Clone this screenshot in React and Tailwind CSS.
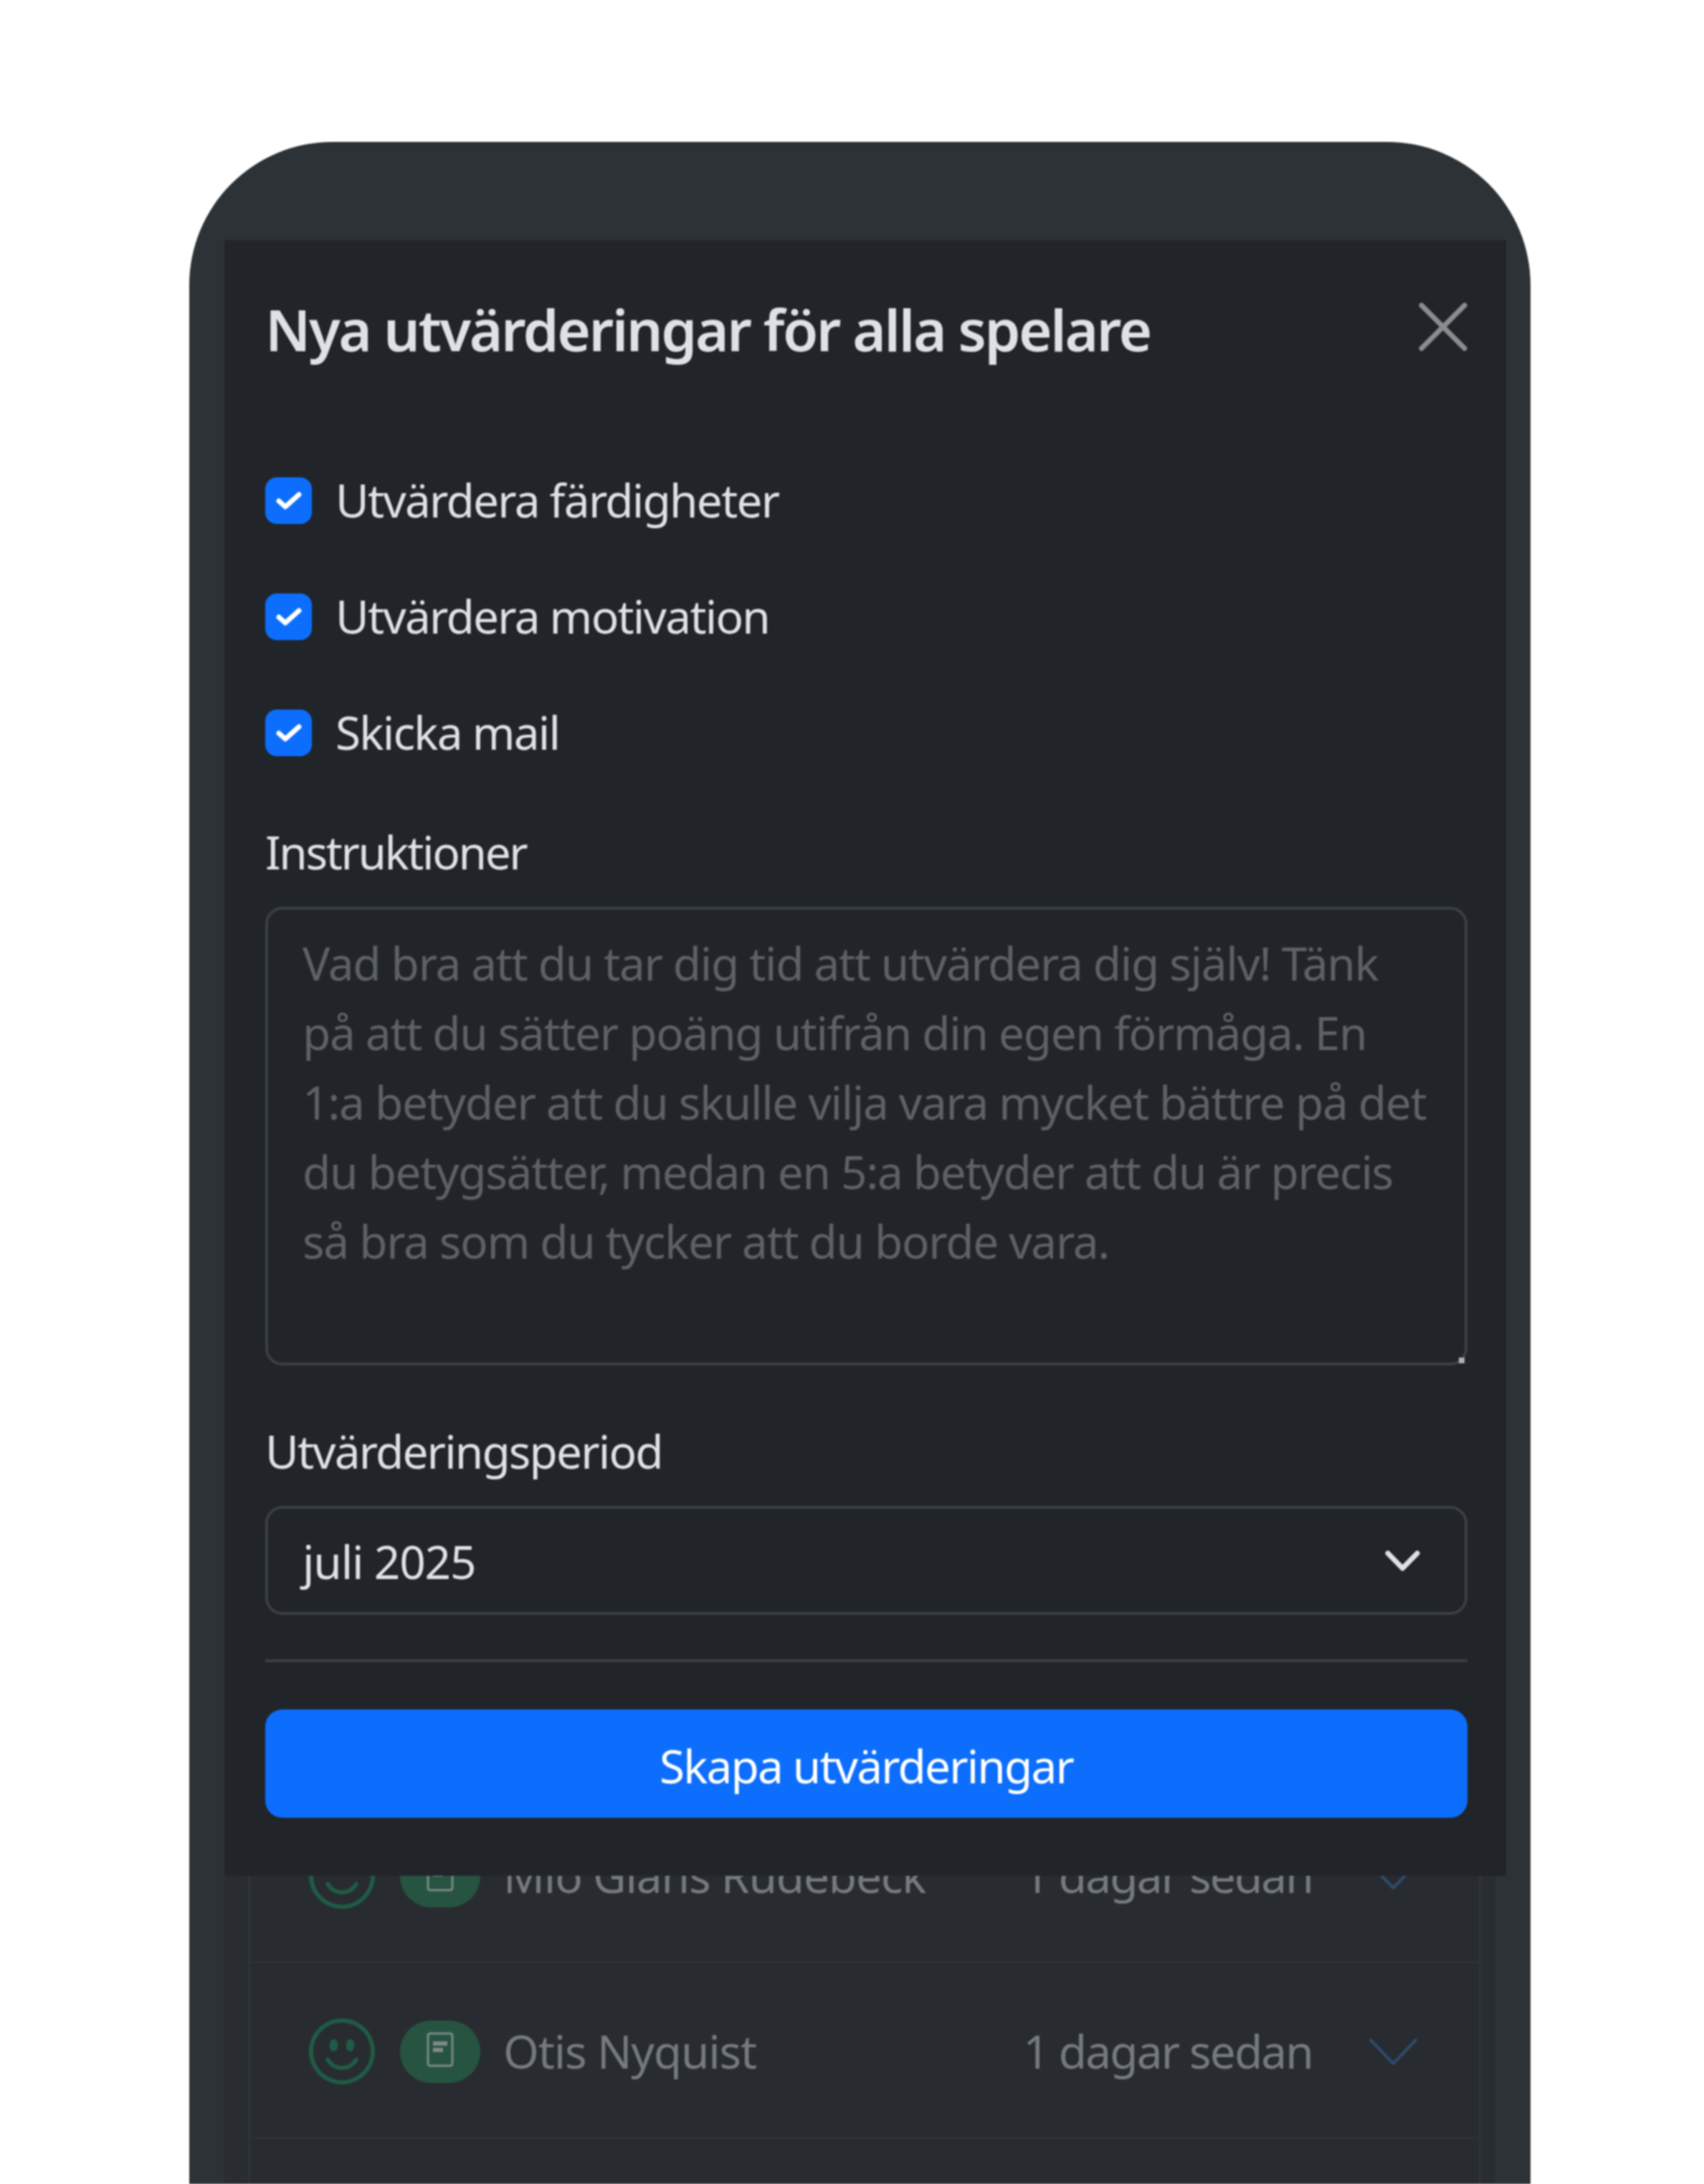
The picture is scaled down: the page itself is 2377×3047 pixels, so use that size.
import { X } from "lucide-react";

const font = "font-['Noto_Sans','Open_Sans',sans-serif]";

function CheckRow({ label }) {
  return (
    <label className="flex h-[162px] items-center gap-[33px]">
      <span className="flex h-[65px] w-[65px] items-center justify-center rounded-[16px] bg-[#0d6efd]">
        <svg viewBox="0 0 36 25" className="h-[25px] w-[36px]" fill="none" stroke="#fff" strokeWidth="7" strokeLinecap="round" strokeLinejoin="round">
          <path d="M4 13l9 8L32 4" />
        </svg>
      </span>
      <span className="text-[64px] leading-[96px] tracking-[-1.8px] text-[#dee2e6]">{label}</span>
    </label>
  );
}

function PlayerRow({ name }) {
  return (
    <div className="flex h-[245px] items-center border-b-[3px] border-[#2d3236] pl-[82px] pr-[86px] pt-[4px]">
      <svg viewBox="0 0 16 16" className="h-[92px] w-[92px] shrink-0" fill="#1f5c45">
        <path d="M8 15A7 7 0 1 1 8 1a7 7 0 0 1 0 14m0 1A8 8 0 1 0 8 0a8 8 0 0 0 0 16" />
        <path d="M4.285 9.567a.5.5 0 0 1 .683.183A3.5 3.5 0 0 0 8 11.5a3.5 3.5 0 0 0 3.032-1.75.5.5 0 1 1 .866.5A4.5 4.5 0 0 1 8 12.5a4.5 4.5 0 0 1-3.898-2.25.5.5 0 0 1 .183-.683M7 6.5C7 7.328 6.552 8 6 8s-1-.672-1-1.5S5.448 5 6 5s1 .672 1 1.5m4 0c0 .828-.448 1.5-1 1.5s-1-.672-1-1.5S9.448 5 10 5s1 .672 1 1.5" />
      </svg>
      <span className="ml-[35px] flex h-[87px] w-[112px] shrink-0 items-center justify-center rounded-full bg-[#265441]">
        <svg viewBox="0 0 38 49" className="mb-[6px] h-[49px] w-[38px]" fill="none">
          <rect x="2" y="2" width="34" height="45" rx="3" stroke="#7d8a88" strokeWidth="3" />
          <rect x="9" y="13" width="20" height="6" fill="#7d8a88" />
          <rect x="9" y="22" width="14" height="6" fill="#7d8a88" />
        </svg>
      </span>
      <span className="ml-[32px] flex-1 text-[64px] leading-[96px] tracking-[-1.2px] text-[#757a7f]">{name}</span>
      <span className="text-[64px] leading-[96px] text-[#757a7f]">1 dagar sedan</span>
      <svg viewBox="0 0 67 37" className="ml-[79px] h-[37px] w-[67px]" fill="none" stroke="#2f4a6d" strokeWidth="4" strokeLinecap="round" strokeLinejoin="round">
        <path d="M2 2l31.5 33L65 2" />
      </svg>
    </div>
  );
}

export default function App() {
  return (
    <div className={`${font} h-[3047px] overflow-hidden bg-white pl-[264px] pt-[198px] tracking-[-1.9px] blur-[1px]`}>
      <div className="relative h-[2849px] w-[1871px] overflow-hidden rounded-t-[200px] bg-[#2d3236]">
        <div className="mx-[49px] mt-[2296px] h-[553px] bg-[#292d32] pl-[33px] pr-[20px]">
          <div className="h-full border-x-[3px] border-[#2f3439] bg-[#282c31]">
            <PlayerRow name="Mio Glans Rudebeck" />
            <PlayerRow name="Otis Nyquist" />
          </div>
        </div>

        {/* modal */}
        <div className="absolute left-[49px] top-[137px] w-[1788px] bg-[#212529] pb-[81px] pl-[57px] pr-[54px]">
          <div className="flex h-[200px] items-center justify-between pt-[48px]">
            <h5 className="text-[80px] font-semibold leading-[120px] tracking-[-2.5px] text-[#dee2e6]">Nya utvärderingar för alla spelare</h5>
            <X className="mb-[-10px] mr-[-26px] mt-[-16px] h-[120px] w-[120px] text-[#8a8c8e]" strokeWidth={1.4} />
          </div>
          <div className="pt-[82px]">
            <CheckRow label="Utvärdera färdigheter" />
            <CheckRow label="Utvärdera motivation" />
            <CheckRow label="Skicka mail" />
          </div>
          <div className="pt-[38px] text-[64px] leading-[96px] tracking-[-2.4px] text-[#dee2e6]">Instruktioner</div>
          <div className="relative mt-[28px] h-[640px] rounded-[24px] border-[4px] border-[#3a3f44] pl-[48px] pr-[44px] pb-[28px] pt-[26px]">
            <p className="whitespace-nowrap text-[64px] leading-[97px] tracking-[-1.35px] text-[#5d6165]">
              Vad bra att du tar dig tid att utvärdera dig själv! Tänk<br />
              på att du sätter poäng utifrån din egen förmåga. En<br />
              1:a betyder att du skulle vilja vara mycket bättre på det<br />
              du betygsätter, medan en 5:a betyder att du är precis<br />
              så bra som du tycker att du borde vara.
            </p>
            <span className="absolute bottom-[-1px] right-[0px] h-[8px] w-[8px] bg-[#b0b0b0]" />
          </div>
          <div className="pt-[72px] text-[64px] leading-[96px] text-[#dee2e6]">Utvärderingsperiod</div>
          <div className="mt-[28px] flex h-[152px] items-center justify-between rounded-[24px] border-[4px] border-[#3a3f44] pl-[48px] pr-[62px]">
            <span className="pt-[4px] text-[64px] leading-[96px] tracking-[-1.2px] text-[#dee2e6]">juli 2025</span>
            <svg viewBox="0 0 49 29" className="h-[29px] w-[49px]" fill="none" stroke="#dee2e6" strokeWidth="7" strokeLinecap="round" strokeLinejoin="round">
              <path d="M4 4l20.5 21L45 4" />
            </svg>
          </div>
          <div className="mt-[62px] border-t-[4px] border-[#3a3f44]" />
          <button type="button" className="mt-[66px] h-[151px] w-full rounded-[24px] bg-[#0d6efd] pt-[6px] text-center text-[64px] leading-[96px] text-white">
            Skapa utvärderingar
          </button>
        </div>
      </div>
    </div>
  );
}
